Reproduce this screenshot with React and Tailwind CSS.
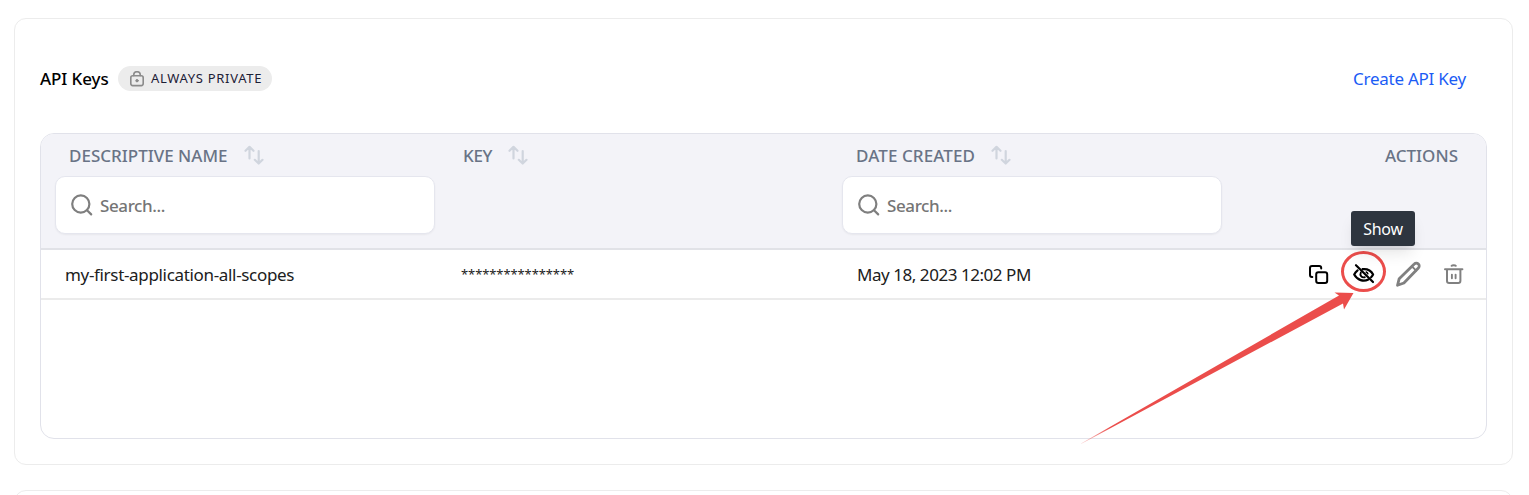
import React from "react";

function SortIcon() {
  return (
    <svg width="20" height="20" viewBox="0 0 20 20" fill="none" stroke="#d0d5de" strokeWidth="2.2" strokeLinecap="round" strokeLinejoin="round">
      <path d="M5.5 13.5V2M1.500 5.800l4-4 4 4M14.700 6v12M10.800 14.800l3.900 3.700 3.800-3.700" />
    </svg>
  );
}

function SearchIcon() {
  return (
    <svg width="22" height="22" viewBox="0 0 22 22" fill="none" stroke="#7f7f7f" strokeWidth="2.2" strokeLinecap="round">
      <circle cx="9.800" cy="10" r="8.600" />
      <path d="M16 16.200l4.200 4.200" />
    </svg>
  );
}

function LockIcon() {
  return (
    <svg width="14" height="16" viewBox="0 0 14 16" fill="none" stroke="#8b8b8b" strokeWidth="1.600" strokeLinecap="round">
      <rect x="0.800" y="4.800" width="12.400" height="9.800" rx="2" />
      <path d="M3.800 4.600V3.600a3.200 2.900 0 0 1 6.400 0v1" />
      <circle cx="7" cy="9.700" r="1.200" fill="#8b8b8b" strokeWidth="1" />
    </svg>
  );
}

function CopyIcon() {
  return (
    <svg width="20" height="20" viewBox="0 0 20 20" fill="none" stroke="#000" strokeWidth="2" strokeLinecap="round" strokeLinejoin="round">
      <rect x="7.200" y="8.200" width="11" height="10.700" rx="2.200" />
      <path d="M3.300 13h-.3a2 2 0 0 1-2-2V4a2 2 0 0 1 2-2h7.200a2 2 0 0 1 2 2v.4" />
    </svg>
  );
}

function HiddenIcon() {
  return (
    <svg width="24" height="24" viewBox="0 0 24 24" fill="none" stroke="#000" strokeWidth="2.200" strokeLinecap="round" strokeLinejoin="round">
      <path d="M4 3.200l17 16.800" />
      <path d="M10.600 7.200c4.700-.5 8.600 1.700 10.500 5.300-.5 1-1.200 1.900-2 2.700" />
      <path d="M5.600 8.400C4.100 9.500 3 10.900 2.200 12.500c3.200 5.900 9.300 7.400 14.200 5" />
      <path d="M8.800 10.600c-1.300 2.800.8 5.300 4 4.700" strokeWidth="1.900" />
      <path d="M14.200 10c.8.400 1.400 1 1.600 1.800" strokeWidth="1.600" />
    </svg>
  );
}

function PencilIcon() {
  return (
    <svg width="26" height="26" viewBox="0 0 26 26" fill="none" stroke="#808080" strokeWidth="2.800" strokeLinecap="round" strokeLinejoin="round">
      <path d="M1.500 24.300l1.700-6.600L18.300 3a2.700 2.700 0 0 1 4.100 4L7.900 22z" />
      <path d="M16 5.500l4.200 4.200" strokeWidth="1.800" />
    </svg>
  );
}

function TrashIcon() {
  return (
    <svg width="20" height="22" viewBox="0 0 20 22" fill="none" stroke="#808080" strokeWidth="2" strokeLinecap="round" strokeLinejoin="round">
      <path d="M1 6.200h17.400M7.600 2.800c.6-.7 3.600-.7 4.200 0M3 6.400v11.400a2.200 2.200 0 0 0 2.200 2.200h9a2.200 2.200 0 0 0 2.200-2.200V6.400" />
      <path d="M7.900 11.600v3.600M11.600 11.600v3.600" strokeWidth="1.900" />
    </svg>
  );
}

function SearchBox() {
  return (
    <div className="mx-[14px] flex h-[58px] w-[380px] items-center rounded-[10px] border border-[#e5e6ee] bg-white pl-[15px] shadow-xs">
      <SearchIcon />
      <span className="ml-[7px] pt-px text-[17px] font-medium tracking-[-0.4px] text-[#757575]">Search...</span>
    </div>
  );
}

function HeaderCell({ label, tracking }) {
  return (
    <div className="flex h-[42px] items-center gap-[16px] pl-[28px]">
      <span className={`text-[17px] leading-none font-medium ${tracking}`}>{label}</span>
      <SortIcon />
    </div>
  );
}

export default function App() {
  return (
    <div className="flex h-[495px] flex-col overflow-hidden bg-white pt-[18px] pr-[16px] pl-[14px] font-['Noto_Sans',sans-serif] whitespace-nowrap">
      <section className="h-[447px] shrink-0 rounded-[12px] border border-[#ececec] px-[25px]">
        <header className="flex h-[114px] items-center justify-between pt-[5px] pr-[21px]">
          <div className="flex items-center">
            <h1 className="w-[78px] text-[17px] font-medium tracking-[-0.1px] text-black">API Keys</h1>
            <div className="flex h-[25px] w-[154px] items-center rounded-full bg-[#ececec] pl-[12px]">
              <LockIcon />
              <span className="ml-[7px] text-[13px] tracking-[0.7px] text-[#1c2036]">ALWAYS PRIVATE</span>
            </div>
          </div>
          <a className="text-[17px] tracking-[-0.25px] text-[#1b5cf5]">Create API Key</a>
        </header>
        <div className="h-[306px] w-[1447px] overflow-hidden rounded-[14px] border border-[#e1e2ea]">
          <div className="grid h-[116px] grid-cols-[394px_393px_394px_1fr] border-b-2 border-[#e1e2e7] bg-[#f3f3f8] text-[#697386]">
            <div>
              <HeaderCell label="DESCRIPTIVE NAME" tracking="tracking-[0px]" />
              <SearchBox />
            </div>
            <HeaderCell label="KEY" tracking="tracking-[-0.3px]" />
            <div>
              <HeaderCell label="DATE CREATED" tracking="tracking-[0.1px]" />
              <SearchBox />
            </div>
            <div className="flex h-[42px] items-center justify-end pr-[28px]">
              <span className="text-[17px] leading-none font-medium tracking-[0px]">ACTIONS</span>
            </div>
          </div>
          <div className="grid h-[50px] grid-cols-[394px_393px_394px_1fr] items-center border-b-2 border-[#ebebeb] text-[17px] text-[#202020]">
            <span className="pt-[2px] pl-[24px] tracking-[-0.33px]">my-first-application-all-scopes</span>
            <span className="pt-[2px] pl-[26px] text-[13px] tracking-[-0.1px]">****************</span>
            <span className="pt-[2px] pl-[29px] tracking-[-0.45px]">May 18, 2023 12:02 PM</span>
            <div className="flex items-center justify-end pr-[22px]">
              <CopyIcon />
              <div className="relative ml-[23px] flex h-[24px] w-[24px]">
                <HiddenIcon />
                <div className="absolute -top-[11px] -left-[11px] h-[41px] w-[45px] rounded-[50%] border-[3px] border-[#eb4d4b]" />
                <div className="absolute -top-[51px] -left-[1px] flex h-[35px] w-[64px] items-center justify-center rounded-[3px] bg-[#2e353f] text-[16px] tracking-[-0.3px] text-white shadow-lg">Show</div>
              </div>
              <span className="ml-[20px]"><PencilIcon /></span>
              <span className="ml-[22px]"><TrashIcon /></span>
            </div>
          </div>
        </div>
      </section>
      <section className="mt-[25px] h-[80px] shrink-0 rounded-[12px] border border-[#ececec]" />
      <svg className="pointer-events-none absolute top-[285px] left-[1075px]" width="290" height="165" viewBox="1075 285 290 165">
        <defs>
          <linearGradient id="tail" gradientUnits="userSpaceOnUse" x1="1080" y1="444" x2="1110" y2="428">
            <stop offset="0" stopColor="#eb4d4b" stopOpacity="0.2" />
            <stop offset="1" stopColor="#eb4d4b" />
          </linearGradient>
        </defs>
        <path d="M1081 443.500L1339 295.500L1334.500 292.500L1353.500 293L1344 309.500L1343 303.500L1081.500 443.700Z" fill="url(#tail)" />
      </svg>
    </div>
  );
}
